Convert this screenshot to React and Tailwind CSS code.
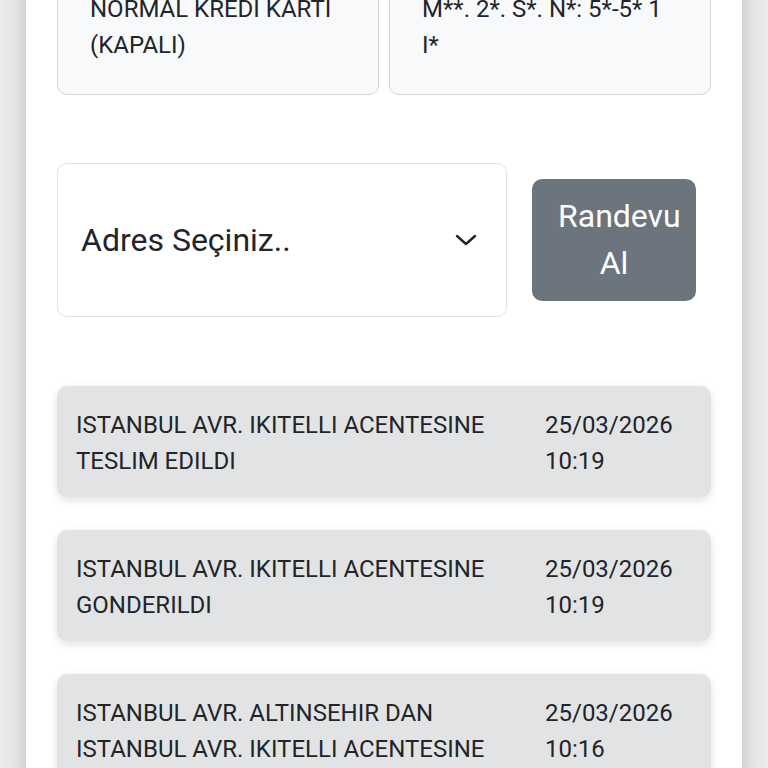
import React from 'react';

const events = [
    { text: 'ISTANBUL AVR. IKITELLI ACENTESINE TESLIM EDILDI', date: '25/03/2026', time: '10:19' },
    { text: 'ISTANBUL AVR. IKITELLI ACENTESINE GONDERILDI', date: '25/03/2026', time: '10:19' },
    { text: 'ISTANBUL AVR. ALTINSEHIR DAN ISTANBUL AVR. IKITELLI ACENTESINE', date: '25/03/2026', time: '10:16' },
];

const InfoCard = ({ lines }) => (
    <div className="flex-1 bg-[#f8f9fa] border border-[#d6d6d6] rounded-[10px] px-[32px] pt-[32px] pb-[31px] text-[24px] leading-[36px] text-[#212529]">
        {lines.map((l, i) => (
            <div key={i}>{l}</div>
        ))}
    </div>
);

const EventCard = ({ text, date, time }) => (
    <div className="flex bg-[#e2e3e5] rounded-[10px] shadow-[0_3px_8px_rgba(0,0,0,0.12)] pl-[19px] pr-[19px] pt-[21px] pb-[18px] text-[24px] leading-[36px] text-[#212529]">
        <div className="flex-1 pr-4">{text}</div>
        <div className="w-[147px]">
            <div>{date}</div>
            <div>{time}</div>
        </div>
    </div>
);

export default function App() {
    return (
        <div className="h-[768px] overflow-hidden bg-[#ececec] px-[26px]" style={{ fontFamily: 'Roboto, "Noto Sans", sans-serif' }}>
            <div className="min-h-[820px] bg-white shadow-[0_0_22px_rgba(0,0,0,0.22)] px-[31px]">
                <div className="flex gap-[10px] -mt-[42px]">
                    <InfoCard lines={['NORMAL KREDI KARTI', '(KAPALI)']} />
                    <InfoCard lines={['M**. 2*. S*. N*: 5*-5* 1', 'I*']} />
                </div>

                <div className="flex items-center gap-[25px] pr-[15px] mt-[68px]">
                    <div className="flex-1 h-[154px] flex items-center justify-between border border-[#e1e1e1] rounded-[10px] pl-[23px] pr-[29px] text-[32px] text-[#212529]">
                        <span>Adres Seçiniz..</span>
                        <svg width="22" height="12" viewBox="0 0 22 12" fill="none" stroke="#212529" strokeWidth="2.4" strokeLinecap="round" strokeLinejoin="round">
                            <path d="M2 2l9 8 9-8" />
                        </svg>
                    </div>
                    <button className="w-[164px] shrink-0 bg-[#6c757d] text-white rounded-[10px] px-[26px] py-[14px] text-[32px] leading-[47px] text-center">
                        Randevu
                        <br />
                        Al
                    </button>
                </div>

                <div className="flex flex-col gap-[33px] mt-[69px]">
                    {events.map((e, i) => (
                        <EventCard key={i} {...e} />
                    ))}
                </div>
            </div>
        </div>
    );
}
